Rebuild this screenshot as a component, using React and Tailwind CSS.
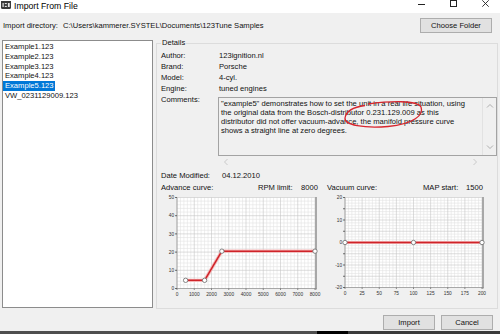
import React from 'react';

function Chart({ w, h, L, R, T, B, xLabels, yLabels, yMinor, pts }) {
  const nx = xLabels.length - 1;
  const ny = yLabels.length - 1;
  const minor = [];
  const major = [];
  for (let i = 0; i <= nx * 5; i++) {
    const x = L + ((R - L) * i) / (nx * 5);
    const el = (
      <line key={'v' + i} x1={x} x2={x} y1={T} y2={B} stroke={i % 5 === 0 ? '#c6c6c6' : '#e3e3e3'} strokeWidth="0.6" />
    );
    (i % 5 === 0 ? major : minor).push(el);
  }
  for (let j = 0; j <= ny * yMinor; j++) {
    const y = T + ((B - T) * j) / (ny * yMinor);
    const el = (
      <line key={'h' + j} x1={L} x2={R} y1={y} y2={y} stroke={j % yMinor === 0 ? '#c6c6c6' : '#e3e3e3'} strokeWidth="0.6" />
    );
    (j % yMinor === 0 ? major : minor).push(el);
  }
  const P = pts.map(([fx, fy]) => [L + (R - L) * fx, B - (B - T) * fy]);
  const poly = P.map((p) => p.join(',')).join(' ');
  return (
    <svg width={w} height={h} viewBox={`0 0 ${w} ${h}`} className="block">
      <rect x={L} y={T} width={R - L} height={B - T} fill="#ffffff" />
      {minor}
      {major}
      <rect x={R} y={T - 0.5} width="2" height={B - T + 1.5} fill="#a8a8a8" />
      <line x1={L} x2={R + 2} y1={B} y2={B} stroke="#9a9a9a" strokeWidth="0.8" />
      <line x1={L} x2={L} y1={T} y2={B} stroke="#9a9a9a" strokeWidth="0.8" />
      {yLabels.map((lab, j) => {
        const y = T + ((B - T) * j) / ny;
        return (
          <g key={'yl' + j}>
            <line x1={L - 2} x2={L} y1={y} y2={y} stroke="#333" strokeWidth="0.7" />
            {lab !== '' && (
              <text x={L - 2.8} y={y + 1.7} fontSize="4.8" textAnchor="end" fill="#333">
                {lab}
              </text>
            )}
          </g>
        );
      })}
      {xLabels.map((lab, i) => {
        const x = L + ((R - L) * i) / nx;
        return (
          <g key={'xl' + i}>
            <line x1={x} x2={x} y1={B} y2={B + 1.5} stroke="#444" strokeWidth="0.6" />
            <text x={x} y={B + 7} fontSize="4.8" textAnchor="middle" fill="#333">
              {lab}
            </text>
          </g>
        );
      })}
      <polyline points={poly} fill="none" stroke="#f3b6b6" strokeWidth="3.2" strokeLinejoin="round" />
      <polyline points={poly} fill="none" stroke="#cf2329" strokeWidth="1.5" strokeLinejoin="round" />
      {P.map(([x, y], k) => (
        <circle key={'p' + k} cx={x} cy={y} r="2.2" fill="#ffffff" stroke="#6a6a6a" strokeWidth="0.8" />
      ))}
    </svg>
  );
}

function Chevron({ dir, color = '#a6a6a6' }) {
  const d = {
    up: 'M1 4.5 L4 1.5 L7 4.5',
    down: 'M1 1.5 L4 4.5 L7 1.5',
    left: 'M4.5 1 L1.5 4 L4.5 7',
    right: 'M1.5 1 L4.5 4 L1.5 7',
  }[dir];
  const vert = dir === 'up' || dir === 'down';
  return (
    <svg width={vert ? 8 : 6} height={vert ? 6 : 8} viewBox={vert ? '0 0 8 6' : '0 0 6 8'} className="block">
      <path d={d} fill="none" stroke={color} strokeWidth="0.9" />
    </svg>
  );
}

const files = ['Example1.123', 'Example2.123', 'Example3.123', 'Example4.123', 'Example5.123', 'VW_0231129009.123'];

const details = [
  ['Author:', '123ignition.nl'],
  ['Brand:', 'Porsche'],
  ['Model:', '4-cyl.'],
  ['Engine:', 'tuned engines'],
];

export default function App() {
  return (
    <div className="w-[500px] h-[334px] overflow-hidden bg-[#f0f0f0] flex flex-col font-['Liberation_Sans',Arial,sans-serif] text-[7.6px] leading-[9px] text-[#111]">
      {/* Title bar */}
      <div className="h-[13px] bg-white flex items-center shrink-0">
        <svg width="10" height="9" viewBox="0 0 10 9" className="ml-[1px] -mt-[3px] block shrink-0">
          <rect x="0" y="-2" width="10" height="10" rx="1.5" fill="#3a3a3a" />
          <rect x="1.5" y="2" width="1.2" height="4" fill="#e8e8e8" />
          <rect x="3.8" y="2" width="2" height="1.1" fill="#e8e8e8" />
          <rect x="3.8" y="4.9" width="2" height="1.1" fill="#e8e8e8" />
          <rect x="6.9" y="2" width="1.8" height="4" fill="#e8e8e8" />
        </svg>
        <span className="ml-[3px] text-[8.7px] leading-[10px] -mt-[1px] text-black">Import From File</span>
        <div className="ml-auto mr-[11px] flex items-start self-start">
          <div className="w-[7px] h-[1px] bg-[#222] mt-[4px]" />
          <div className="ml-[25px] w-[7px] h-[7px] border border-[#222]" />
          <svg width="7" height="7" viewBox="0 0 7 7" className="ml-[25px] block">
            <path d="M0.3 0.3 L6.7 6.7 M6.7 0.3 L0.3 6.7" stroke="#222" strokeWidth="0.9" />
          </svg>
        </div>
      </div>

      {/* Directory row */}
      <div className="h-[25px] flex items-center shrink-0">
        <span className="ml-[3px] w-[60px] whitespace-nowrap">Import directory:</span>
        <span className="whitespace-nowrap">C:\Users\kammerer.SYSTEL\Documents\123Tune Samples</span>
        <button className="ml-auto mr-[8px] w-[72px] h-[15px] bg-[#e1e1e1] border border-[#adadad] text-[7.6px] leading-[13px] text-[#111]">
          Choose Folder
        </button>
      </div>

      {/* Main */}
      <div className="flex h-[271px] shrink-0">
        <div className="ml-[2px] mt-[2px] w-[151px] h-[268px] bg-white border border-[#8c8c8c] shrink-0">
          <div className="pt-px">
            {files.map((f, i) => (
              <div key={f} className="h-[9.8px] leading-[9.8px] whitespace-nowrap">
                <span
                  className={
                    i === 4
                      ? 'inline-block h-full bg-[#0078d7] text-white pl-[2px] pr-[1px]'
                      : 'inline-block h-full pl-[2px]'
                  }
                >
                  {f}
                </span>
              </div>
            ))}
          </div>
        </div>

        <fieldset className="ml-[3px] mr-[2px] flex-1 min-w-0 h-[271px] border border-[#dcdcdc] pl-[4px] pr-0">
          <legend className="px-[1px] leading-[10px]">Details</legend>
          <div className="pt-[1.5px]">
            {details.map(([l, v]) => (
              <div key={l} className="flex h-[11px] items-center whitespace-nowrap">
                <span className="w-[57px]">{l}</span>
                <span className="ml-px">{v}</span>
              </div>
            ))}
            <div className="flex">
              <span className="w-[57px] leading-[11px] shrink-0">Comments:</span>
              <div className="relative flex-1 mt-[3.5px] h-[59px] bg-[#f0f0f0] border border-[#a3a3a3] flex">
                <div className="flex-1 pl-[2px] pt-[1px] leading-[9px] whitespace-nowrap overflow-hidden">
                  <div>"example5" demonstrates how to set the unit in a real life situation, using</div>
                  <div>the original data from the Bosch-distributor 0.231.129.009 as this</div>
                  <div>distributor did not offer vacuum-advance, the manifold pressure curve</div>
                  <div>shows a straight line at zero degrees.</div>
                </div>
                <div className="w-[14px] border-l border-[#e2e2e2] flex flex-col items-center justify-between py-[5px]">
                  <Chevron dir="up" />
                  <Chevron dir="down" />
                </div>
                <svg width="279" height="59" viewBox="0 0 279 59" className="absolute left-[-1px] top-[-1px] pointer-events-none">
                  <path
                    d="M150 7 C172 4 199 3 203 10 C206 18 196 27 170 29.5 C146 31.5 126 28 127 21 C128 14 136 10 147 8.5"
                    fill="none"
                    stroke="#d7262e"
                    strokeWidth="1.3"
                  />
                </svg>
              </div>
            </div>
            <div className="ml-[57px] w-[265px] h-[11px] flex items-center justify-between px-[5px]">
              <Chevron dir="left" color="#c4c4c4" />
              <Chevron dir="right" color="#c4c4c4" />
            </div>
            <div className="mt-[2.5px] h-[11px] flex items-center whitespace-nowrap">
              <span className="w-[61px]">Date Modified:</span>
              <span>04.12.2010</span>
            </div>
            <div className="mt-[1px] h-[11px] grid grid-cols-[166px_1fr] items-center whitespace-nowrap">
              <div className="flex">
                <span className="w-[97px]">Advance curve:</span>
                <span className="w-[43px]">RPM limit:</span>
                <span>8000</span>
              </div>
              <div className="flex">
                <span className="w-[96px]">Vacuum curve:</span>
                <span className="w-[43px]">MAP start:</span>
                <span>1500</span>
              </div>
            </div>
            <div className="grid grid-cols-[166px_1fr]">
              <Chart
                w={160}
                h={108}
                L={16}
                R={154}
                T={4.5}
                B={95.5}
                xLabels={['0', '1000', '2000', '3000', '4000', '5000', '6000', '7000', '8000']}
                yLabels={['50', '40', '30', '20', '10', '0']}
                yMinor={5}
                pts={[
                  [500 / 8000, 4.5 / 50],
                  [1600 / 8000, 4.5 / 50],
                  [2600 / 8000, 20.5 / 50],
                  [1, 20.5 / 50],
                ]}
              />
              <Chart
                w={170}
                h={108}
                L={18}
                R={155}
                T={4.5}
                B={94.5}
                xLabels={['0', '25', '50', '75', '100', '125', '150', '175', '200']}
                yLabels={['20', '', '10', '', '0', '', '-10', '', '-20']}
                yMinor={4}
                pts={[
                  [0, 0.5],
                  [0.5, 0.5],
                  [1, 0.5],
                ]}
              />
            </div>
          </div>
        </fieldset>
      </div>

      {/* Bottom buttons */}
      <div className="h-[22px] flex justify-end items-start pt-[6px] pr-[7px] gap-[6px] shrink-0">
        <button className="w-[52px] h-[15px] bg-[#e1e1e1] border border-[#adadad] text-[7.6px] leading-[13px] text-[#111]">
          Import
        </button>
        <button className="w-[52px] h-[15px] bg-[#e1e1e1] border border-[#adadad] text-[7.6px] leading-[13px] text-[#111]">
          Cancel
        </button>
      </div>

      {/* Taskbar strip */}
      <div className="h-[3px] flex shrink-0">
        <div className="w-[317px] bg-[#4e4e4e]" />
        <div className="w-[31px] bg-black" />
        <div className="flex-1 bg-[#3a3a3a]" />
      </div>
    </div>
  );
}
